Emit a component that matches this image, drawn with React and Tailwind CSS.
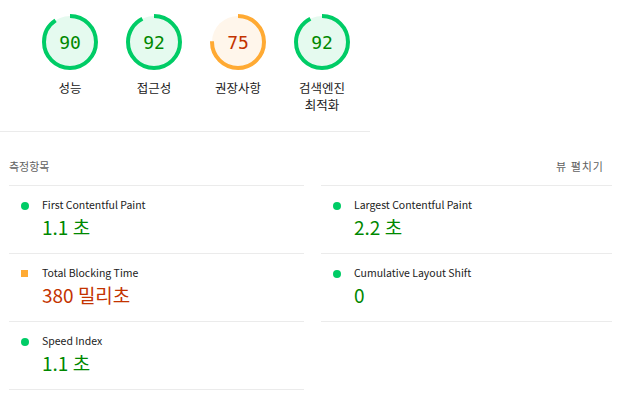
import React from 'react';

const gauges = [
  { score: 90, label: ['성능'], type: 'pass' },
  { score: 92, label: ['접근성'], type: 'pass' },
  { score: 75, label: ['권장사항'], type: 'average' },
  { score: 92, label: ['검색엔진', '최적화'], type: 'pass' },
];

const metricsLeft = [
  { title: 'First Contentful Paint', value: '1.1 초', type: 'pass' },
  { title: 'Total Blocking Time', value: '380 밀리초', type: 'average' },
  { title: 'Speed Index', value: '1.1 초', type: 'pass' },
];

const metricsRight = [
  { title: 'Largest Contentful Paint', value: '2.2 초', type: 'pass' },
  { title: 'Cumulative Layout Shift', value: '0', type: 'pass' },
];

const font = { fontFamily: '"Noto Sans CJK KR", "Noto Sans", sans-serif' };

const Gauge = ({ score, label, type }) => {
  const r = 26;
  const circ = 2 * Math.PI * r;
  const stroke = type === 'pass' ? '#00cc66' : '#ffaa33';
  const fill = type === 'pass' ? '#e5faef' : '#fff6eb';
  const text = type === 'pass' ? 'text-[#008800]' : 'text-[#c33300]';

  return (
    <div className="w-[84px] flex flex-col items-center">
      <div className="relative w-[56px] h-[56px]">
        <svg width="56" height="56" viewBox="0 0 56 56" className="-rotate-90">
          <circle cx="28" cy="28" r={r} fill={fill} />
          <circle
            cx="28"
            cy="28"
            r={r}
            fill="none"
            stroke={stroke}
            strokeWidth="4"
            strokeDasharray={`${(circ * score) / 100} ${circ}`}
          />
        </svg>
        <div
          className={`absolute inset-0 flex items-center justify-center text-[18px] ${text}`}
          style={{ fontFamily: '"DejaVu Sans Mono", monospace' }}
        >
          {score}
        </div>
      </div>
      <div className="mt-[9px] text-[12.5px] leading-[17px] text-[#212121] text-center">
        {label.map((l) => (
          <div key={l}>{l}</div>
        ))}
      </div>
    </div>
  );
};

const Metric = ({ title, value, type }) => (
  <div className="h-[68px] border-b border-[#ebebeb] flex">
    <div className="w-[33px] pl-[12px] pt-[16px]">
      {type === 'pass' ? (
        <div className="w-[8px] h-[8px] rounded-full bg-[#00cc66]" />
      ) : (
        <div className="w-[7px] h-[7px] bg-[#ffaa33]" />
      )}
    </div>
    <div className="pt-[12px]">
      <div className="text-[10.5px] leading-[14px] text-[#212121]">{title}</div>
      <div
        className={`mt-[3px] text-[19px] leading-[24px] ${
          type === 'pass' ? 'text-[#008800]' : 'text-[#c33300]'
        }`}
      >
        {value}
      </div>
    </div>
  </div>
);

const App = () => {
  return (
    <div className="w-[622px] h-[394px] bg-white overflow-hidden" style={font}>
      <div className="w-[370px] h-[132px] border-b border-[#ebebeb] flex pl-[28px] pt-[14px]">
        {gauges.map((g, i) => (
          <Gauge key={i} {...g} />
        ))}
      </div>

      <div className="flex justify-between pl-[9px] pr-[18px] pt-[26px] pb-[11px] text-[11px] leading-[16px] text-[#616161]">
        <span>측정항목</span>
        <span className="tracking-[1px]">뷰 펼치기</span>
      </div>

      <div className="grid grid-cols-[295px_291px] gap-x-[17px] pl-[9px]">
        <div className="border-t border-[#ebebeb]">
          {metricsLeft.map((m) => (
            <Metric key={m.title} {...m} />
          ))}
        </div>
        <div className="border-t border-[#ebebeb]">
          {metricsRight.map((m) => (
            <Metric key={m.title} {...m} />
          ))}
        </div>
      </div>
    </div>
  );
};

export default App;
